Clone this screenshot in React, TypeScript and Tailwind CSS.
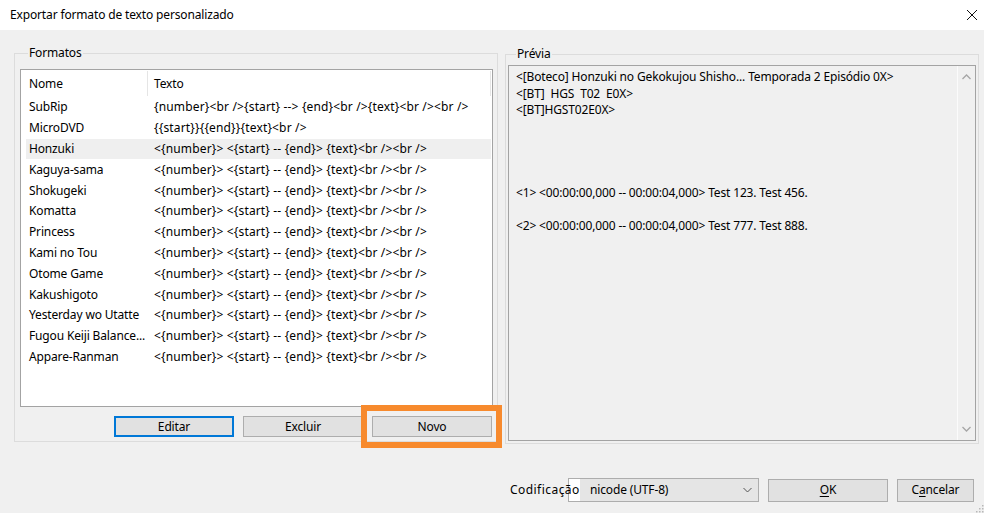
import React from 'react'

const formats: [string, string][] = [
  ['SubRip', '{number}<br />{start} --> {end}<br />{text}<br /><br />'],
  ['MicroDVD', '{{start}}{{end}}{text}<br />'],
  ['Honzuki', '<{number}> <{start} -- {end}> {text}<br /><br />'],
  ['Kaguya-sama', '<{number}> <{start} -- {end}> {text}<br /><br />'],
  ['Shokugeki', '<{number}> <{start} -- {end}> {text}<br /><br />'],
  ['Komatta', '<{number}> <{start} -- {end}> {text}<br /><br />'],
  ['Princess', '<{number}> <{start} -- {end}> {text}<br /><br />'],
  ['Kami no Tou', '<{number}> <{start} -- {end}> {text}<br /><br />'],
  ['Otome Game', '<{number}> <{start} -- {end}> {text}<br /><br />'],
  ['Kakushigoto', '<{number}> <{start} -- {end}> {text}<br /><br />'],
  ['Yesterday wo Utatte', '<{number}> <{start} -- {end}> {text}<br /><br />'],
  ['Fugou Keiji Balance...', '<{number}> <{start} -- {end}> {text}<br /><br />'],
  ['Appare-Ranman', '<{number}> <{start} -- {end}> {text}<br /><br />'],
]

const preview = [
  '<[Boteco] Honzuki no Gekokujou Shisho... Temporada 2 Episódio 0X>',
  '<[BT]  HGS  T02  E0X>',
  '<[BT]HGST02E0X>',
  '',
  '',
  '',
  '',
  '<1> <00:00:00,000 -- 00:00:04,000> Test 123. Test 456.',
  '',
  '<2> <00:00:00,000 -- 00:00:04,000> Test 777. Test 888.',
]

function Chevron({ up }: { up?: boolean }) {
  return (
    <svg width="9" height="6" viewBox="0 0 9 6" className="text-[#a6a6a6]">
      <path d={up ? 'M0.5 5L4.5 1L8.5 5' : 'M0.5 1L4.5 5L8.5 1'} fill="none" stroke="currentColor" strokeWidth="1.3" />
    </svg>
  )
}

// size and border come in through className so nothing clashes
function Button({ children, className }: { children: React.ReactNode; className: string }) {
  return (
    <button className={`bg-[#e1e1e1] flex items-center justify-center text-black ${className}`}>
      {children}
    </button>
  )
}

export default function App() {
  return (
    <div className="w-[984px] h-[513px] bg-[#f0f0f0] flex flex-col font-['Noto_Sans',sans-serif] text-[12px] leading-[16px] tracking-[-0.15px] text-black overflow-hidden relative">
      {/* title bar */}
      <div className="h-[30px] bg-white flex items-center justify-between pl-[10px] pr-[7px] shrink-0">
        <span>Exportar formato de texto personalizado</span>
        <svg width="10" height="10" viewBox="0 0 10 10">
          <path d="M0 0L10 10M10 0L0 10" stroke="#111" strokeWidth="1" />
        </svg>
      </div>

      <div className="flex items-start pl-[14px] mt-[15px]">
        {/* Formatos */}
        <fieldset className="w-[484px] border border-[#dcdcdc] pl-[5px] pr-[4px] pt-[8px] pb-[4px]">
          <legend className="ml-[8px] px-[1px] leading-[16px]">Formatos</legend>
          <div className="h-[338px] bg-white border border-[#a3a3a3] flex flex-col">
            <div className="h-[27px] flex items-stretch shrink-0">
              <div className="w-[127px] pl-[8px] flex items-center border-r border-[#e5e5e5] my-[1px]">Nome</div>
              <div className="w-[343px] pl-[6px] flex items-center border-r border-[#e5e5e5] my-[1px]">Texto</div>
            </div>
            {formats.map(([name, text], i) => (
              <div
                key={name}
                className={`h-[20.8px] ml-[5px] mr-[1px] flex items-center whitespace-nowrap ${i === 2 ? 'bg-[#efefef]' : ''}`}
              >
                <div className="w-[121px] pl-[3px] overflow-hidden">{name}</div>
                <div className="pl-[7px] tracking-[0.15px]">{text}</div>
              </div>
            ))}
          </div>
          <div className="mt-[9px] flex justify-end gap-[9px] pr-[1px]">
            <Button className="w-[120px] h-[21px] border-2 border-[#0078d7]">Editar</Button>
            <Button className="w-[120px] h-[21px] border border-[#adadad]">Excluir</Button>
            <div className="relative">
              <Button className="w-[120px] h-[21px] border border-[#adadad]">Novo</Button>
              <div className="absolute -left-[11px] -right-[10px] -top-[11px] -bottom-[11px] border-[6px] border-[#f78a2d]" />
            </div>
          </div>
        </fieldset>

        {/* Prévia */}
        <fieldset className="w-[474px] ml-[7px] mt-[1px] border border-[#dcdcdc] px-[2px] pt-[3px] pb-[2px]">
          <legend className="ml-[8px] px-[1px] leading-[16px]">Prévia</legend>
          <div className="h-[376px] border border-[#a3a3a3] bg-[#f0f0f0] flex">
            <div className="flex-1 pl-[7px] pt-[3px] leading-[16.5px] whitespace-pre">
              {preview.map((line, i) => (
                <div key={i} className="h-[16.5px]">{line}</div>
              ))}
            </div>
            <div className="w-[18px] border-l border-[#fbfbfb] flex flex-col items-center justify-between py-[8px]">
              <Chevron up />
              <Chevron />
            </div>
          </div>
        </fieldset>
      </div>

      {/* bottom row */}
      <div className="flex items-center justify-end pr-[10px] mt-[34px]">
        <div className="w-[58px] whitespace-nowrap relative z-10 tracking-[0.45px]">Codificação</div>
        <div className="w-[191px] h-[24px] border border-[#adadad] bg-[#e5e5e5] flex items-center">
          <div className="w-[11px] h-full bg-white" />
          <span className="pl-[10px] flex-1">nicode (UTF-8)</span>
          <svg width="9" height="6" viewBox="0 0 9 6" className="mr-[6px]">
            <path d="M0.5 1L4.5 5L8.5 1" fill="none" stroke="#555" strokeWidth="1" />
          </svg>
        </div>
        <Button className="ml-[9px] w-[120px] h-[23px] border border-[#adadad]">
          <span><span className="underline underline-offset-2">O</span>K</span>
        </Button>
        <Button className="ml-[9px] w-[77px] h-[23px] border border-[#adadad]">
          <span>C<span className="underline underline-offset-2">a</span>ncelar</span>
        </Button>
      </div>

      {/* resize grip */}
      <svg width="10" height="10" viewBox="0 0 10 10" className="absolute right-0 bottom-0">
        {[[8, 2], [8, 5], [5, 5], [8, 8], [5, 8], [2, 8]].map(([x, y]) => (
          <rect key={`${x}-${y}`} x={x} y={y} width="1.5" height="1.5" fill="#b8b8b8" />
        ))}
      </svg>
    </div>
  )
}
